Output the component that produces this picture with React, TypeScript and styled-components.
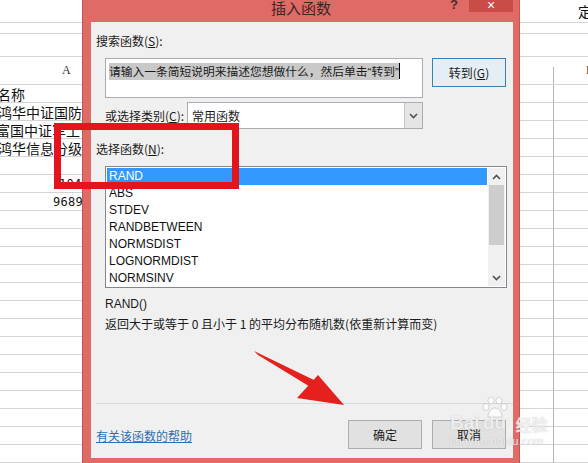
import React from 'react';
import styled, { createGlobalStyle } from 'styled-components';

const CJK = `"Noto Sans CJK SC", "Noto Sans", sans-serif`;
const UI = `"Liberation Sans", "Noto Sans CJK SC", sans-serif`;
const FRAME = '#e06a66';
const GRID = '#d4d4d4';
const DIVIDER = '#b4b4b4';

const GlobalStyle = createGlobalStyle`
  html, body {
    margin: 0;
    padding: 0;
    background: #fff;
    overflow: hidden;
  }
`;

const Screen = styled.div`
  position: relative;
  width: 588px;
  height: 463px;
  overflow: hidden;
  display: grid;
  grid-template-columns: 82px 438px 68px;
  background: #fff;
  font-family: ${CJK};
`;

/* ---------- spreadsheet behind the dialog ---------- */

const rowHeights = [23, 11, 23, 28, ...Array(21).fill(18)];

const Sheet = styled.div<{ $cols: string }>`
  display: grid;
  grid-template-columns: ${(p) => p.$cols};
  grid-template-rows: ${rowHeights.map((h) => `${h}px`).join(' ')};
  overflow: hidden;
  font-size: 14px;
  color: #111;
`;

const Cell = styled.div<{ $indent?: number; $span?: boolean; $divider?: boolean }>`
  ${(p) => (p.$span ? 'grid-column: 1 / -1;' : '')}
  box-sizing: border-box;
  border-bottom: 1px solid ${GRID};
  border-right: ${(p) => (p.$divider ? `1px solid ${DIVIDER}` : 'none')};
  display: flex;
  align-items: center;
  white-space: nowrap;
  overflow: hidden;
  padding-left: ${(p) => (p.$indent && p.$indent > 0 ? p.$indent : 0)}px;
  text-indent: ${(p) => (p.$indent && p.$indent < 0 ? p.$indent : 0)}px;
`;

const HeaderCell = styled.div`
  box-sizing: border-box;
  border-bottom: 1px solid ${GRID};
  display: flex;
  align-items: stretch;
`;

const HeaderDivider = styled.div`
  width: 34px;
  margin-top: 10px;
  box-sizing: border-box;
  border-right: 1px solid ${DIVIDER};
`;

const HeaderLetter = styled.span<{ $indent: number }>`
  font-family: "Liberation Serif", serif;
  font-size: 12px;
  color: #333;
  align-self: center;
  margin-left: ${(p) => p.$indent}px;
  white-space: nowrap;
`;

const Num = styled.span`
  font-family: "DejaVu Sans Mono", monospace;
  font-size: 12px;
  letter-spacing: 0.3px;
`;

const leftContent: Record<number, React.ReactNode> = {
  4: '名称',
  5: '鸿华中证国防',
  6: '富国中证军工',
  7: '鸿华信息分级',
  9: <Num>1046.3</Num>,
  10: <Num>9689.2</Num>,
};

const leftIndent: Record<number, number> = { 4: -3, 5: -2, 6: -4, 7: -2, 9: 59, 10: 53 };

/* ---------- dialog window ---------- */

const Window = styled.div`
  display: flex;
  flex-direction: column;
  background: ${FRAME};
  box-shadow: inset 1px 0 0 #c9524e, inset -1px 0 0 #c9524e;
`;

const TitleBar = styled.div`
  flex: 0 0 22px;
  display: grid;
  grid-template-columns: 1fr auto 1fr;
  align-items: start;
`;

const Title = styled.div`
  grid-column: 2;
  font-size: 15px;
  line-height: 16px;
  color: #3d2626;
`;

const Controls = styled.div`
  grid-column: 3;
  justify-self: end;
  display: flex;
  align-items: flex-start;
  margin-right: 7px;
`;

const Help = styled.span`
  font-family: ${UI};
  font-size: 13px;
  font-weight: bold;
  line-height: 12px;
  color: #4a2b2b;
  margin-right: 11px;
  margin-top: -1px;
`;

const Close = styled.div`
  width: 44px;
  height: 12px;
  background: #c94c47;
  color: #fff;
  font-family: ${UI};
  font-size: 14px;
  line-height: 10px;
  text-align: center;
`;

const Body = styled.div`
  flex: 1;
  margin: 0 7px 5px 9px;
  background: #f0f0f0;
  display: flex;
  flex-direction: column;
  font-size: 12px;
  color: #1b1b1b;
`;

const Label = styled.div<{ $top: number; $left?: number }>`
  margin: ${(p) => p.$top}px 0 0 ${(p) => p.$left ?? 5}px;
  line-height: 16px;
  white-space: nowrap;
`;

const SearchRow = styled.div`
  display: flex;
  align-items: flex-start;
  gap: 9px;
  margin: 9px 0 0 14px;
`;

const SearchBox = styled.div`
  width: 318px;
  height: 40px;
  box-sizing: border-box;
  border: 1px solid #abadb3;
  background: #fff;
  padding: 4px 0 0 3px;
  line-height: 16px;
  white-space: nowrap;
  display: flex;
  align-items: flex-start;
`;

const Selected = styled.span`
  background: #c9c9c9;
  font-size: 11.75px;
`;

const Quote = styled.span`
  font-family: ${UI};
`;

const Caret = styled.span`
  width: 1px;
  height: 16px;
  background: #000;
`;

const Button = styled.div<{ $primary?: boolean }>`
  width: 74px;
  height: 29px;
  box-sizing: border-box;
  border: 1px solid ${(p) => (p.$primary ? '#3c7fb1' : '#adadad')};
  background: ${(p) => (p.$primary ? '#e5edf5' : '#e1e1e1')};
  display: flex;
  align-items: center;
  justify-content: center;
  font-size: 12px;
`;

const CategoryRow = styled.div`
  display: flex;
  align-items: center;
  margin: 4px 0 0 14px;
`;

const CategoryLabel = styled.div`
  width: 82px;
  white-space: nowrap;
`;

const Select = styled.div`
  width: 236px;
  height: 27px;
  box-sizing: border-box;
  border: 1px solid #abadb3;
  background: #fff;
  display: flex;
  align-items: stretch;
`;

const SelectValue = styled.div`
  flex: 1;
  display: flex;
  align-items: center;
  padding-left: 4px;
`;

const SelectArrow = styled.div`
  width: 17px;
  background: #e5e5e5;
  border-left: 1px solid #c5c5c5;
  display: flex;
  align-items: center;
  justify-content: center;
`;

const ListBox = styled.div`
  margin: 9px 0 0 14px;
  width: 402px;
  height: 122px;
  box-sizing: border-box;
  border: 1px solid #828790;
  background: #fff;
  display: flex;
  padding: 1px;
`;

const Items = styled.div`
  flex: 1;
  display: flex;
  flex-direction: column;
  padding-right: 1px;
`;

const Item = styled.div<{ $active?: boolean }>`
  height: 17px;
  line-height: 17px;
  padding-left: 2px;
  font-family: ${UI};
  font-size: 12px;
  background: ${(p) => (p.$active ? '#3399ff' : 'transparent')};
  color: ${(p) => (p.$active ? '#fff' : '#111')};
`;

const ScrollBar = styled.div`
  width: 17px;
  background: #f0f0f0;
  display: flex;
  flex-direction: column;
  align-items: center;
`;

const ScrollArrow = styled.div`
  height: 17px;
  display: flex;
  align-items: center;
  justify-content: center;
`;

const Thumb = styled.div`
  width: 15px;
  height: 60px;
  background: #cdcdcd;
`;

const Track = styled.div`
  flex: 1;
`;

const Separator = styled.div`
  margin: 71px 0 0 5px;
  height: 1px;
  background: #d9d9d9;
`;

const Footer = styled.div`
  display: flex;
  align-items: center;
  margin: 16px 0 0 5px;
`;

const HelpLink = styled.span`
  color: #2f6eb5;
  text-decoration: underline;
  flex: 1;
  margin-top: 1px;
`;

const FooterButtons = styled.div`
  display: flex;
  gap: 10px;
  margin-right: 7px;
`;

const U = styled.span`
  text-decoration: underline;
`;

const Latin = styled.span`
  font-family: ${UI};
`;

/* ---------- annotations over the screenshot ---------- */

const Highlight = styled.div`
  position: absolute;
  left: 54px;
  top: 123px;
  width: 185px;
  height: 66px;
  box-sizing: border-box;
  border: 7px solid #e3141c;
`;

const Overlay = styled.svg`
  position: absolute;
  left: 0;
  top: 0;
  pointer-events: none;
`;

const Watermark = styled.div`
  position: absolute;
  left: 450px;
  top: 396px;
  color: rgba(255, 255, 255, 0.8);
  text-shadow: 0 0 1px rgba(120, 120, 120, 0.5);
  font-family: ${UI};
  pointer-events: none;
  display: flex;
  flex-direction: column;
`;

const Brand = styled.div`
  display: flex;
  align-items: flex-end;
  font-size: 19px;
  font-weight: bold;
  line-height: 20px;
`;

const Paw = styled.span`
  display: flex;
  flex-direction: column;
  align-items: center;
`;

const Jy = styled.span`
  font-family: ${CJK};
  font-size: 16px;
  font-weight: bold;
  margin-left: 6px;
  line-height: 18px;
`;

const Domain = styled.div`
  font-size: 11px;
  margin-top: 2px;
  letter-spacing: 0.3px;
`;

const Chevron = ({ up }: { up?: boolean }) => (
  <svg width="9" height="6" viewBox="0 0 9 6">
    <path
      d={up ? 'M1 5 L4.5 1.5 L8 5' : 'M1 1 L4.5 4.5 L8 1'}
      fill="none"
      stroke="#505050"
      strokeWidth="1.6"
    />
  </svg>
);

const functions = ['RAND', 'ABS', 'STDEV', 'RANDBETWEEN', 'NORMSDIST', 'LOGNORMDIST', 'NORMSINV'];

export default function App() {
  return (
    <>
      <GlobalStyle />
      <Screen>
        <Sheet $cols="82px">
          {rowHeights.map((_, i) =>
            i === 3 ? (
              <HeaderCell key={i}>
                <HeaderLetter $indent={62}>A</HeaderLetter>
              </HeaderCell>
            ) : (
              <Cell key={i} $indent={leftIndent[i]}>
                {leftContent[i]}
              </Cell>
            )
          )}
        </Sheet>

        <Window>
          <TitleBar>
            <Title>插入函数</Title>
            <Controls>
              <Help>?</Help>
              <Close>×</Close>
            </Controls>
          </TitleBar>
          <Body>
            <Label $top={11}>
              搜索函数(<U>S</U>):
            </Label>
            <SearchRow>
              <SearchBox>
                <Selected>
                  请输入一条简短说明来描述您想做什么，然后单击<Quote>“</Quote>转到<Quote>”</Quote>
                </Selected>
                <Caret />
              </SearchBox>
              <Button $primary>
                转到(<U>G</U>)
              </Button>
            </SearchRow>
            <CategoryRow>
              <CategoryLabel>
                或选择类别(<U>C</U>):
              </CategoryLabel>
              <Select>
                <SelectValue>常用函数</SelectValue>
                <SelectArrow>
                  <Chevron />
                </SelectArrow>
              </Select>
            </CategoryRow>
            <Label $top={12}>
              选择函数(<U>N</U>):
            </Label>
            <ListBox>
              <Items>
                {functions.map((f, i) => (
                  <Item key={f} $active={i === 0}>
                    {f}
                  </Item>
                ))}
              </Items>
              <ScrollBar>
                <ScrollArrow>
                  <Chevron up />
                </ScrollArrow>
                <Thumb />
                <Track />
                <ScrollArrow>
                  <Chevron />
                </ScrollArrow>
              </ScrollBar>
            </ListBox>
            <Label $top={7} $left={14}>
              <Latin>RAND()</Latin>
            </Label>
            <Label $top={4} $left={14}>
              返回大于或等于 0 且小于 1 的平均分布随机数(依重新计算而变)
            </Label>
            <Separator />
            <Footer>
              <HelpLink>有关该函数的帮助</HelpLink>
              <FooterButtons>
                <Button>确定</Button>
                <Button>取消</Button>
              </FooterButtons>
            </Footer>
          </Body>
        </Window>

        <Sheet $cols="34px 34px">
          <Cell $span $indent={58}>定</Cell>
          <Cell $span />
          <Cell $span />
          <HeaderCell>
            <HeaderDivider />
          </HeaderCell>
          <HeaderCell>
            <HeaderLetter $indent={32}>B</HeaderLetter>
          </HeaderCell>
          {rowHeights.slice(4).map((_, i) => (
            <React.Fragment key={i}>
              <Cell $divider />
              <Cell />
            </React.Fragment>
          ))}
        </Sheet>

        <Highlight />
        <Overlay width="588" height="463" viewBox="0 0 588 463">
          <path d="M254 351 L258 355 L312 388 L316 381 Z" fill="#e4211c" />
          <polygon points="318,375 344,405 297,398" fill="#e4211c" />
        </Overlay>
        <Watermark>
          <Brand>
            <span>Bai</span>
            <Paw>
              <svg width="30" height="22" viewBox="0 0 30 22">
                <g fill="rgba(255,255,255,0.8)" stroke="rgba(140,140,140,0.4)" strokeWidth="0.8">
                  <ellipse cx="6" cy="11" rx="3" ry="3.5" />
                  <ellipse cx="11" cy="4.5" rx="3" ry="3.5" />
                  <ellipse cx="19" cy="4.5" rx="3" ry="3.5" />
                  <ellipse cx="24" cy="11" rx="3" ry="3.5" />
                  <path d="M8 21 C8 15 12 12 15 12 C18 12 22 15 22 21 Z" />
                </g>
              </svg>
              <span style={{ marginTop: -5 }}>du</span>
            </Paw>
            <Jy>经验</Jy>
          </Brand>
          <Domain>jingyan.baidu.com</Domain>
        </Watermark>
      </Screen>
    </>
  );
}
